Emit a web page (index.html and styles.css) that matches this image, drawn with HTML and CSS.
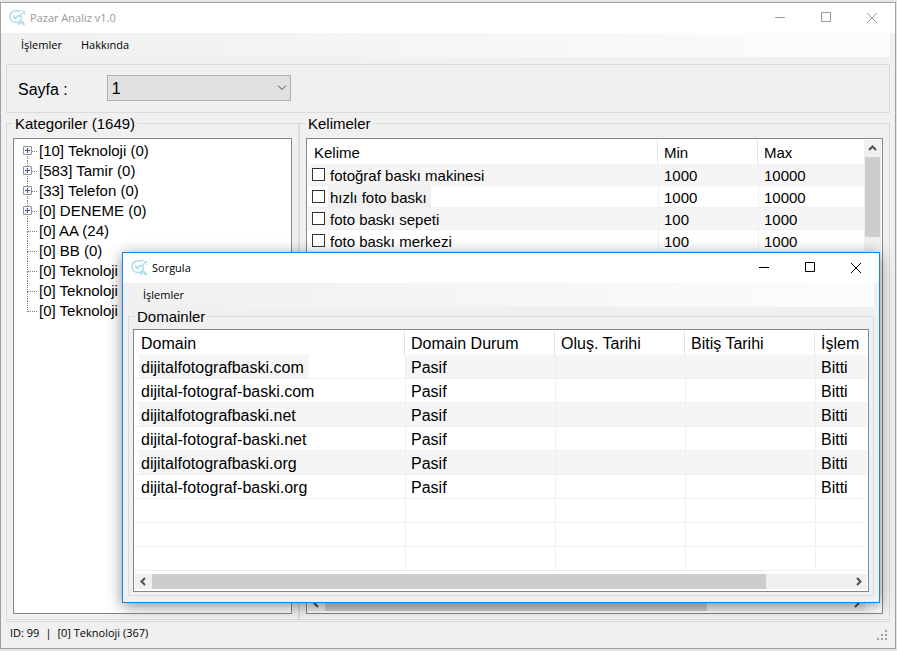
FILE: index.html
```html
<!DOCTYPE html>
<html lang="tr">
<head>
    <meta charset="UTF-8">
    <meta name="viewport" content="width=device-width, initial-scale=1.0">
    <title>Pazar Analiz v1.0</title>
    <link rel="stylesheet" href="styles.css">
</head>
<body>
    <svg class="symbols" aria-hidden="true">
        <symbol id="logo" viewBox="0 0 17 17">
            <path d="M10.500 1.500C5 -.5 1 2.500 1 6.500S4 12.500 7 12.500s5.500-2 5.500-6" fill="none" stroke="#a9dcec" stroke-width="1.500"/>
            <path d="M4 5.500l2.500 3 2.500-3 1.500 1L14 2.500" fill="none" stroke="#a9dcec" stroke-width="1.500"/>
            <path d="M14 1h2v2h-2zM11 0h2v1h-2zM15 4h1v1h-1z" fill="#a9dcec"/>
            <path d="M9 13.500h3M12 11l3.500 4" fill="none" stroke="#a9dcec" stroke-width="2"/>
        </symbol>
        <symbol id="minimize" viewBox="0 0 11 11">
            <path d="M0 4.5h10" stroke="currentColor"/>
        </symbol>
        <symbol id="maximize" viewBox="0 0 11 11">
            <path d="M.5 -.5h9v9h-9z" fill="none" stroke="currentColor"/>
        </symbol>
        <symbol id="close" viewBox="0 0 11 11">
            <path d="M0 0l10 10M10 0l-10 10" stroke="currentColor"/>
        </symbol>
        <symbol id="up" viewBox="0 0 9 9">
            <path d="M1 6l3.500-3.500L8 6" fill="none" stroke="#505050" stroke-width="2"/>
        </symbol>
        <symbol id="left" viewBox="0 0 9 9">
            <path d="M6 1L2.500 4.500 6 8" fill="none" stroke="#505050" stroke-width="2"/>
        </symbol>
        <symbol id="right" viewBox="0 0 9 9">
            <path d="M3 1l3.500 3.500L3 8" fill="none" stroke="#505050" stroke-width="2"/>
        </symbol>
    </svg>

    <main class="window">
        <header class="titlebar">
            <svg class="logo"><use href="#logo"/></svg>
            <h1>Pazar Analiz v1.0</h1>
            <button type="button" aria-label="Simge durumuna küçült"><svg><use href="#minimize"/></svg></button>
            <button type="button" aria-label="Ekranı kapla"><svg><use href="#maximize"/></svg></button>
            <button type="button" aria-label="Kapat"><svg><use href="#close"/></svg></button>
        </header>
        <nav class="menu">
            <button type="button">İşlemler</button>
            <button type="button">Hakkında</button>
        </nav>

        <div class="client">
            <div class="page-bar">
                <label for="page">Sayfa :</label>
                <div class="select">
                    <select id="page">
                        <option>1</option>
                    </select>
                    <svg viewBox="0 0 10 6"><path d="M1 .5l4 4 4-4" fill="none" stroke="#505050"/></svg>
                </div>
            </div>

            <div class="panels">
                <fieldset class="group categories">
                    <legend>Kategoriler (1649)</legend>
                    <ul class="tree">
                        <li><button type="button" aria-label="Genişlet"></button>[10] Teknoloji (0)</li>
                        <li><button type="button" aria-label="Genişlet"></button>[583] Tamir (0)</li>
                        <li><button type="button" aria-label="Genişlet"></button>[33] Telefon (0)</li>
                        <li><button type="button" aria-label="Genişlet"></button>[0] DENEME (0)</li>
                        <li>[0] AA (24)</li>
                        <li>[0] BB (0)</li>
                        <li>[0] Teknoloji</li>
                        <li>[0] Teknoloji</li>
                        <li>[0] Teknoloji</li>
                    </ul>
                </fieldset>

                <fieldset class="group words">
                    <legend>Kelimeler</legend>
                    <div class="list">
                        <div class="list-view">
                            <table class="word-table">
                                <thead>
                                    <tr><th>Kelime</th><th class="col-min">Min</th><th class="col-max">Max</th></tr>
                                </thead>
                                <tbody>
                                    <tr>
                                        <td><div class="word"><input type="checkbox" id="w1"><label for="w1">fotoğraf baskı makinesi</label></div></td>
                                        <td>1000</td><td>10000</td>
                                    </tr>
                                    <tr class="focused">
                                        <td><div class="word"><input type="checkbox" id="w2"><label for="w2">hızlı foto baskı</label></div></td>
                                        <td>1000</td><td>10000</td>
                                    </tr>
                                    <tr>
                                        <td><div class="word"><input type="checkbox" id="w3"><label for="w3">foto baskı sepeti</label></div></td>
                                        <td>100</td><td>1000</td>
                                    </tr>
                                    <tr>
                                        <td><div class="word"><input type="checkbox" id="w4"><label for="w4">foto baskı merkezi</label></div></td>
                                        <td>100</td><td>1000</td>
                                    </tr>
                                </tbody>
                            </table>
                            <div class="scroll vertical">
                                <svg><use href="#up"/></svg>
                                <div class="thumb"></div>
                            </div>
                        </div>
                        <div class="scroll">
                            <svg><use href="#left"/></svg>
                            <div class="track"><div class="thumb"></div></div>
                            <svg><use href="#right"/></svg>
                        </div>
                    </div>
                </fieldset>
            </div>
        </div>

        <footer class="status">
            <span>ID: 99</span><span>|</span><span>[0] Teknoloji (367)</span>
            <svg class="grip" viewBox="0 0 11 11">
                <path d="M8 0h2v2h-2zM8 4h2v2h-2zM4 4h2v2h-2zM8 8h2v2h-2zM4 8h2v2h-2zM0 8h2v2h-2z" fill="#a0a0a0"/>
            </svg>
        </footer>
    </main>

    <section class="dialog" role="dialog" aria-labelledby="dialogTitle">
        <header class="titlebar">
            <svg class="logo"><use href="#logo"/></svg>
            <h2 id="dialogTitle">Sorgula</h2>
            <button type="button" aria-label="Simge durumuna küçült"><svg><use href="#minimize"/></svg></button>
            <button type="button" aria-label="Ekranı kapla"><svg><use href="#maximize"/></svg></button>
            <button type="button" aria-label="Kapat"><svg><use href="#close"/></svg></button>
        </header>
        <nav class="menu">
            <button type="button">İşlemler</button>
        </nav>
        <div class="client">
            <fieldset class="group">
                <legend>Domainler</legend>
                <div class="list">
                    <table class="domain-table">
                        <thead>
                            <tr>
                                <th class="col-domain">Domain</th>
                                <th class="col-durum">Domain Durum</th>
                                <th class="col-date">Oluş. Tarihi</th>
                                <th class="col-date">Bitiş Tarihi</th>
                                <th>İşlem</th>
                            </tr>
                        </thead>
                        <tbody>
                            <tr class="focused"><td><span>dijitalfotografbaski.com</span></td><td>Pasif</td><td></td><td></td><td>Bitti</td></tr>
                            <tr><td>dijital-fotograf-baski.com</td><td>Pasif</td><td></td><td></td><td>Bitti</td></tr>
                            <tr><td>dijitalfotografbaski.net</td><td>Pasif</td><td></td><td></td><td>Bitti</td></tr>
                            <tr><td>dijital-fotograf-baski.net</td><td>Pasif</td><td></td><td></td><td>Bitti</td></tr>
                            <tr><td>dijitalfotografbaski.org</td><td>Pasif</td><td></td><td></td><td>Bitti</td></tr>
                            <tr><td>dijital-fotograf-baski.org</td><td>Pasif</td><td></td><td></td><td>Bitti</td></tr>
                            <tr class="empty"><td></td><td></td><td></td><td></td><td></td></tr>
                            <tr class="empty"><td></td><td></td><td></td><td></td><td></td></tr>
                            <tr class="empty"><td></td><td></td><td></td><td></td><td></td></tr>
                        </tbody>
                    </table>
                    <div class="scroll">
                        <svg><use href="#left"/></svg>
                        <div class="track"><div class="thumb"></div></div>
                        <svg><use href="#right"/></svg>
                    </div>
                </div>
            </fieldset>
        </div>
    </section>
</body>
</html>
```

FILE: styles.css
```css
:root {
    --face: #f0f0f0;
    --line: #dcdcdc;
    --grid: #f0f0f0;
    --stripe: #f5f5f5;
    --box: #828790;
    --thumb: #cdcdcd;
    --ui: "Open Sans", "Noto Sans", sans-serif;
}

* {
    box-sizing: border-box;
}

body {
    margin: 0;
    padding: 2px 1px 2px 0;
    min-height: 100vh;
    display: flex;
    background: #e4e4e4;
    color: #000;
    font: 15px/18px "Liberation Sans", Arial, sans-serif;
}

.symbols {
    position: absolute;
    width: 0;
    height: 0;
}

symbol {
    overflow: visible;
}

button,
select {
    font: inherit;
    color: inherit;
    border: none;
    background: none;
    padding: 0;
}

/* windows */
.window {
    flex: 1;
    min-width: 0;
    display: flex;
    flex-direction: column;
    border: 1px solid #a0a0a0;
    background: var(--face);
}

.dialog {
    position: absolute;
    top: 252px;
    left: 122px;
    right: 17px;
    border: 1px solid #1883d7;
    background: var(--face);
    box-shadow: 0 3px 14px rgba(0, 0, 0, 0.45);
}

.titlebar {
    display: flex;
    align-items: center;
    height: 30px;
    padding-left: 8px;
    background: #fff;
    font: 11px/16px var(--ui);
}

.window .titlebar {
    color: #999;
}

.titlebar h1,
.titlebar h2 {
    flex: 1;
    margin: 0 0 0 4px;
    font: inherit;
}

.logo {
    width: 17px;
    height: 17px;
}

.titlebar button {
    display: flex;
    align-items: center;
    justify-content: center;
    width: 46px;
    height: 30px;
}

.titlebar button svg {
    width: 11px;
    height: 11px;
    overflow: visible;
}

.menu {
    display: flex;
    gap: 19px;
    height: 24px;
    margin-right: 5px;
    padding-left: 20px;
    background: linear-gradient(to right, #f0f0f0, #fcfcfc);
    font: 11px/16px var(--ui);
}

.client {
    padding: 0 5px;
}

.window .client {
    flex: 1;
    display: flex;
    flex-direction: column;
    padding-top: 7px;
}

.dialog .client {
    padding-bottom: 6px;
}

/* page selector */
.page-bar {
    display: flex;
    align-items: center;
    gap: 39px;
    height: 49px;
    padding: 0 0 2px 11px;
    border: 1px solid var(--line);
    font-size: 16px;
}

.page-bar label {
    padding-top: 4px;
}

.select {
    display: flex;
    align-items: center;
    width: 184px;
    height: 26px;
    border: 1px solid #adadad;
    background: #e1e1e1;
}

.select select {
    flex: 1;
    height: 24px;
    padding: 2px 0 0 4px;
    appearance: none;
}

.select svg {
    width: 10px;
    height: 6px;
    margin-right: 3px;
}

/* group boxes */
.panels {
    flex: 1;
    display: flex;
    padding-top: 1px;
}

.group {
    min-width: 0;
    margin: 0;
    padding: 5px 6px;
    border: 1px solid var(--line);
}

.group legend {
    padding: 1px 2px 0;
}

.categories {
    flex: 0 0 293px;
}

.words {
    flex: 1;
}

.dialog .group {
    padding: 3px 4px;
}

.dialog legend {
    margin-left: 2px;
}

/* category tree */
.tree {
    height: 100%;
    margin: 0;
    padding: 2px 9px;
    border: 1px solid var(--box);
    background: #fff;
    list-style: none;
}

.tree li {
    position: relative;
    height: 20px;
    padding-left: 16px;
    line-height: 20px;
}

.tree li::before {
    content: "";
    position: absolute;
    left: 4px;
    top: 0;
    width: 9px;
    height: 10px;
    border-left: 1px dotted #808080;
    border-bottom: 1px dotted #808080;
}

.tree li:not(:last-child)::after {
    content: "";
    position: absolute;
    left: 4px;
    top: 10px;
    height: 10px;
    border-left: 1px dotted #808080;
}

.tree li:first-child::before {
    border-left-color: transparent;
}

.tree button {
    position: absolute;
    z-index: 1;
    left: 0;
    top: 5px;
    width: 9px;
    height: 9px;
    border: 1px solid #919191;
    border-radius: 1px;
    background:
        linear-gradient(#3c5a9c, #3c5a9c) center / 5px 1px no-repeat,
        linear-gradient(#3c5a9c, #3c5a9c) center / 1px 5px no-repeat,
        #f4f4f4;
}

/* list views */
.list {
    display: flex;
    flex-direction: column;
    height: 100%;
    padding: 1px;
    border: 1px solid var(--box);
    background: #fff;
}

.list-view {
    flex: 1;
    display: flex;
    align-items: flex-start;
}

table {
    width: 100%;
    table-layout: fixed;
    border-collapse: separate;
    border-spacing: 0;
}

th,
td {
    height: 24px;
    padding: 2px 0 0 6px;
    text-align: left;
    font-weight: normal;
    white-space: nowrap;
}

th {
    border-right: 1px solid #e5e5e5;
}

th:last-child {
    border-right: none;
}

td {
    border-bottom: 1px solid var(--grid);
}

td + td {
    border-left: 1px solid var(--grid);
    padding-left: 5px;
}

tbody tr:nth-child(odd):not(.empty) td {
    background: var(--stripe);
}

.col-min {
    width: 100px;
}

.col-max {
    width: 106px;
}

.word-table td {
    height: 22px;
}

.word-table tbody td:first-child {
    padding: 0;
    background: #fff;
}

.word {
    display: flex;
    align-items: center;
    gap: 3px;
    padding-left: 4px;
}

.word input {
    appearance: none;
    width: 13px;
    height: 13px;
    margin: 0;
    border: 1px solid #333;
    background: #fff;
}

.word label {
    flex: 1;
    padding: 2px 0 0 2px;
    line-height: 19px;
}

tr:nth-child(odd) .word label {
    background: var(--stripe);
}

.focused .word label {
    flex: none;
    padding-right: 4px;
    background: var(--face);
}

.domain-table {
    margin-bottom: 3px;
    font-size: 16px;
}

.col-domain {
    width: 270px;
}

.col-durum {
    width: 150px;
}

.col-date {
    width: 130px;
}

.domain-table tbody tr:nth-child(odd):not(.empty) td:first-child {
    background: linear-gradient(to right, #fff 4px, var(--stripe) 4px);
}

.domain-table tbody tr.focused:not(.empty) td:first-child {
    padding: 0 0 0 4px;
    background: #fff;
}

.focused span {
    display: block;
    width: max-content;
    padding: 2px 5px 0 2px;
    background: var(--stripe);
    line-height: 21px;
}

/* scroll bars */
.scroll {
    display: flex;
    align-items: center;
    height: 15px;
    margin-bottom: 1px;
    background: var(--face);
}

.scroll svg {
    flex: none;
    width: 9px;
    height: 9px;
    margin: 4px;
}

.track {
    flex: 1;
}

.scroll .thumb {
    width: 88%;
    height: 15px;
    background: var(--thumb);
}

.words .list > .scroll {
    margin-right: 16px;
}

.words .track .thumb {
    width: 73%;
}

.scroll.vertical {
    flex: 0 0 15px;
    flex-direction: column;
    align-self: stretch;
    height: auto;
    margin: 0;
}

.scroll.vertical .thumb {
    width: 15px;
    height: 80px;
}

/* status bar */
.status {
    display: flex;
    gap: 6px;
    height: 27px;
    margin: 1px 5px 0;
    padding: 3px 2px 0 4px;
    border-top: 1px solid #d7d7d7;
    font: 11px/16px var(--ui);
}

.grip {
    width: 11px;
    height: 11px;
    margin: 5px 0 0 auto;
}
```
